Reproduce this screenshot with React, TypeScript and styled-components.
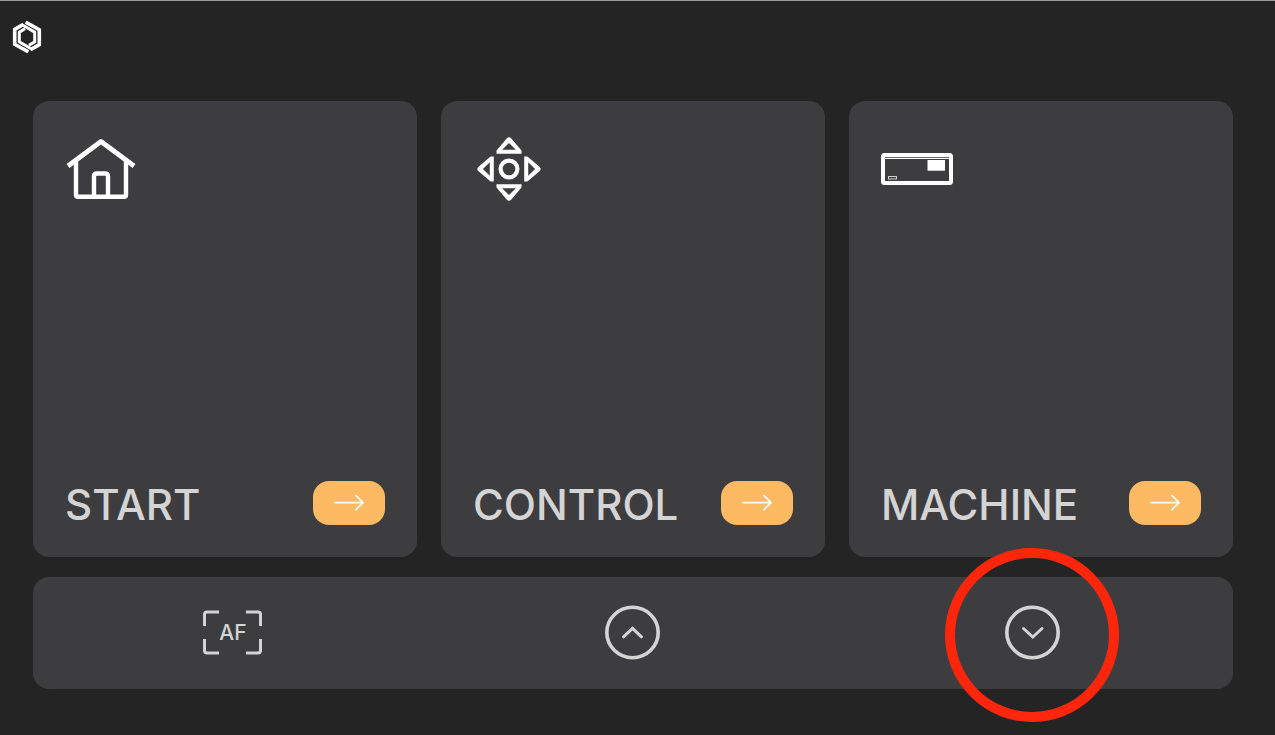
import React from "react";
import styled, { createGlobalStyle } from "styled-components";

const GlobalStyle = createGlobalStyle`
  * { box-sizing: border-box; }
  html { background: #242424; }
  body { margin: 0; font-family: Inter, "Open Sans", sans-serif; color: #d4d4d4; }
`;

const Screen = styled.div`
  min-height: 100vh;
  display: flex;
  flex-direction: column;
  border-top: 1px solid #9c9c9c;
  background: #242424;
`;

const Header = styled.header`
  padding: 20px 12px 48px;
`;

const HomeLink = styled.a`
  display: block;
  width: 30px;
  height: 32px;
`;

const Main = styled.main`
  flex: 1;
  display: flex;
  flex-direction: column;
  gap: 20px;
  padding: 0 42px 46px 33px;
`;

const Cards = styled.div`
  flex: 1;
  display: grid;
  grid-template-columns: repeat(3, 1fr);
  gap: 24px;
`;

const Card = styled.section`
  display: flex;
  flex-direction: column;
  justify-content: space-between;
  min-width: 0;
  padding: 32px;
  border-radius: 16px;
  background: #3d3d3f;
`;

const CardFooter = styled.div`
  display: flex;
  align-items: center;
  justify-content: space-between;
  height: 44px;
`;

const Title = styled.h2`
  margin: 0;
  padding-top: 4px;
  font-size: 42px;
  line-height: 44px;
  font-weight: 500;
`;

const GoButton = styled.button`
  flex: none;
  width: 72px;
  height: 44px;
  padding: 0;
  border: 0;
  border-radius: 16px;
  background: #fdba62;
  cursor: pointer;
  svg { display: block; }
`;

const Toolbar = styled.nav`
  display: grid;
  grid-template-columns: repeat(3, 1fr);
  align-items: center;
  justify-items: center;
  height: 112px;
  border-radius: 16px;
  background: #3d3d3f;
`;

const ToolButton = styled.button`
  position: relative;
  display: grid;
  place-items: center;
  width: 60px;
  height: 56px;
  padding: 0;
  border: 0;
  background: none;
  color: inherit;
  font: 500 21px/24px Inter, sans-serif;
  cursor: pointer;
  svg { grid-area: 1 / 1; }
  span { grid-area: 1 / 1; }
`;

const Highlight = styled.i`
  position: absolute;
  top: -57px;
  left: -58px;
  width: 174px;
  height: 174px;
  border: 10px solid #ff260c;
  border-radius: 50%;
  pointer-events: none;
`;

const Logo = () => (
  <svg width="30" height="32" viewBox="-15 -16 30 32" fill="none" stroke="#fff">
    {[0, 180].map((a) => (
      <g key={a} transform={`rotate(${a})`}>
        <path strokeWidth="3.6" d="M-1.4 -14.9L12.3 -7.2V7.6L3.6 12.6" />
        <path strokeWidth="3" d="M5 12.2L-7.7 4.9V-4.8L-2 -8.2" />
      </g>
    ))}
  </svg>
);

const HouseIcon = () => (
  <svg width="72" height="72" viewBox="0 0 72 72" fill="none" stroke="#fff" strokeWidth="4.4">
    <path d="M3 33L36 8.5L69 33" strokeWidth="4.8" strokeLinejoin="round" />
    <path d="M11 28V61.7Q11 63.7 13 63.7H59Q61 63.7 61 61.7V28" />
    <path d="M29 63V43.3Q29 40.5 32 40.5H40Q43 40.5 43 43.3V63" />
  </svg>
);

const PadIcon = () => (
  <svg width="72" height="72" viewBox="0 0 72 72" fill="#fff">
    {[0, 90, 180, 270].map((a) => (
      <path
        key={a}
        transform={`rotate(${a} 36 36)`}
        fillRule="evenodd"
        d="M23.5 20.8V17.6L33.7 5.5Q36 3.1 38.3 5.5L48.5 17.6V20.8ZM29.2 16.8H42.8L36 9.9Z"
      />
    ))}
    <circle cx="36" cy="36" r="8.4" fill="none" stroke="#fff" strokeWidth="4.2" />
  </svg>
);

const MachineIcon = () => (
  <svg width="72" height="72" viewBox="0 0 72 72" fill="none" stroke="#fff">
    <rect x="2" y="22" width="68" height="28" rx="1.5" strokeWidth="4" />
    <path d="M4 25.5H68" />
    <path d="M4 24.5H68" stroke="#666668" />
    <rect x="46.5" y="27" width="17.5" height="10.7" fill="#fff" stroke="none" />
    <rect x="7.5" y="43.5" width="8" height="2.5" stroke="#d0d0d0" />
  </svg>
);

const ArrowIcon = () => (
  <svg width="72" height="44" viewBox="0 0 72 44" fill="none" stroke="#fff" strokeWidth="1.7" strokeLinecap="round" strokeLinejoin="round">
    <path d="M22 21.7H50M43 14.7L50 21.7L43 28.7" />
  </svg>
);

const FrameIcon = () => (
  <svg width="60" height="46" viewBox="0 0 60 46" fill="none" stroke="#d4d4d4" strokeWidth="3">
    <path d="M1.5 16V4.5Q1.5 2 4 2H16M43 2H55Q57.5 2 57.5 4.5V16M57.5 29V40.5Q57.5 43 55 43H43M16 43H4Q1.5 43 1.5 40.5V29" />
  </svg>
);

const ChevronIcon = ({ down = false }: { down?: boolean }) => (
  <svg width="56" height="56" viewBox="0 0 56 56" fill="none" stroke="#d4d4d4" strokeWidth="3.6" strokeLinecap="round">
    <ellipse cx="27.5" cy="27.5" rx="25.7" ry="25.2" />
    <path d={down ? "M18.5 23.5L27.8 32L37 23.5" : "M18.5 31.8L27.5 23.3L36.5 31.8"} strokeWidth="3" />
  </svg>
);

const sections = [
  { title: "START", Icon: HouseIcon },
  { title: "CONTROL", Icon: PadIcon },
  { title: "MACHINE", Icon: MachineIcon },
];

export default function App() {
  return (
    <Screen>
      <GlobalStyle />
      <Header>
        <HomeLink href="#" aria-label="Home"><Logo /></HomeLink>
      </Header>
      <Main>
        <Cards>
          {sections.map(({ title, Icon }) => (
            <Card key={title}>
              <Icon />
              <CardFooter>
                <Title>{title}</Title>
                <GoButton aria-label={`Open ${title}`}><ArrowIcon /></GoButton>
              </CardFooter>
            </Card>
          ))}
        </Cards>
        <Toolbar>
          <ToolButton><FrameIcon /><span>AF</span></ToolButton>
          <ToolButton aria-label="Up"><ChevronIcon /></ToolButton>
          <ToolButton aria-label="Down"><ChevronIcon down /><Highlight /></ToolButton>
        </Toolbar>
      </Main>
    </Screen>
  );
}
